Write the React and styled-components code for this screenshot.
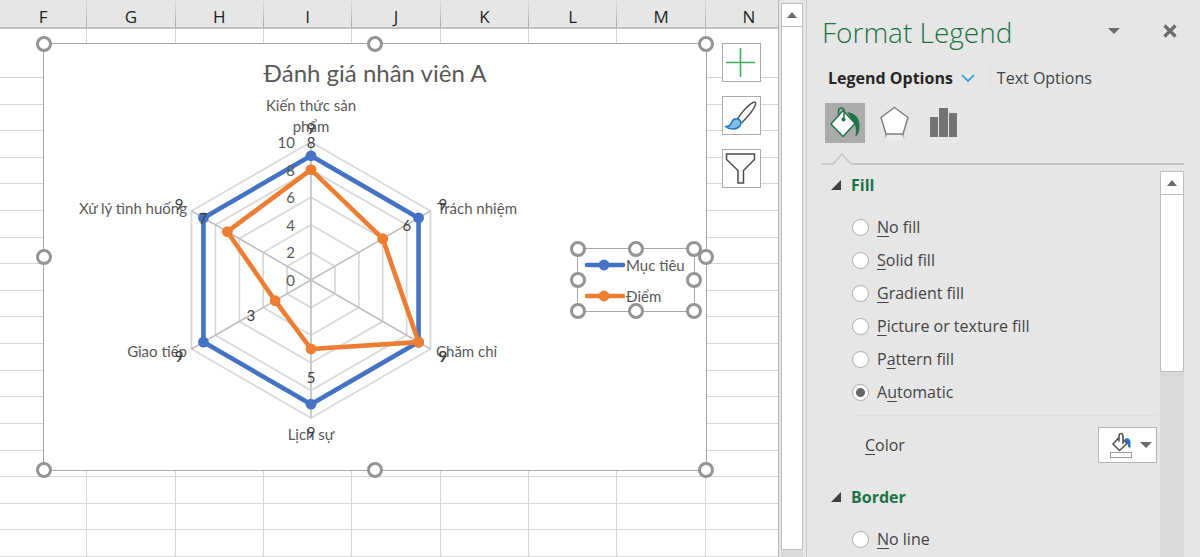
import React from 'react'
import styled, { createGlobalStyle } from 'styled-components'

const columns = ['F', 'G', 'H', 'I', 'J', 'K', 'L', 'M', 'N']
const rowCount = 19

const categories = [
    { lines: ['Kiến thức sản', 'phẩm'], x: 267, y: 61, anchor: 'middle' },
    { lines: ['Trách nhiệm'], x: 393, y: 164, anchor: 'start' },
    { lines: ['Chăm chỉ'], x: 392, y: 307, anchor: 'start' },
    { lines: ['Lịch sự'], x: 267, y: 390, anchor: 'middle' },
    { lines: ['Giao tiếp'], x: 143, y: 307, anchor: 'end' },
    { lines: ['Xử lý tình huống'], x: 143, y: 164, anchor: 'end' },
]

const series = [
    { name: 'Mục tiêu', color: '#4472c4', values: [9, 9, 9, 9, 9, 9] },
    { name: 'Điểm', color: '#ed7d31', values: [8, 6, 9, 5, 3, 7] },
]

const fillOptions = [
    ['', 'N', 'o fill'],
    ['', 'S', 'olid fill'],
    ['', 'G', 'radient fill'],
    ['', 'P', 'icture or texture fill'],
    ['P', 'a', 'ttern fill'],
    ['A', 'u', 'tomatic'],
]

const center = { x: 267, y: 236 }
const radius = 138

const point = (value, index, extra = 0) => {
    const angle = (Math.PI / 3) * index
    const r = (radius * value) / 10 + extra
    return [center.x + r * Math.sin(angle), center.y - r * Math.cos(angle)]
}

const ring = (values) => values.map((v, i) => point(v, i).join(',')).join(' ')

const Radar = () => (
    <Plot viewBox="0 0 662 426" role="img" aria-label="Đánh giá nhân viên A">
        {[2, 4, 6, 8, 10].map((n) => (
            <polygon key={n} points={ring(Array(6).fill(n))} fill="none" stroke="#d9d9d9" strokeWidth="1.8" />
        ))}
        {categories.map((c, i) => {
            const [x, y] = point(10, i)
            return <line key={i} x1={center.x} y1={center.y} x2={x} y2={y} stroke="#bfbfbf" strokeWidth="1.6" />
        })}
        {series.map((s) => (
            <g key={s.name} fill={s.color}>
                <polygon points={ring(s.values)} fill="none" stroke={s.color} strokeWidth="4.6" strokeLinejoin="round" />
                {s.values.map((v, i) => {
                    const [x, y] = point(v, i)
                    return <circle key={i} cx={x} cy={y} r="5.4" />
                })}
            </g>
        ))}
        {[0, 2, 4, 6, 8, 10].map((n) => (
            <Label key={n} x="251" y={center.y - (radius * n) / 10 + 6} textAnchor="end">{n}</Label>
        ))}
        {categories.map((c) => c.lines.map((line, i) => (
            <Label key={line} x={c.x} y={c.y + 6 + i * 21} textAnchor={c.anchor}>{line}</Label>
        )))}
        {series.map((s) => s.values.map((v, i) => {
            const [x, y] = point(v, i, 28)
            return <Label key={s.name + i} $dark x={x} y={y + 6} textAnchor="middle">{v}</Label>
        }))}
    </Plot>
)

const Handles = () => (
    <>
        {[[0, 0], [50, 0], [100, 0], [0, 50], [100, 50], [0, 100], [50, 100], [100, 100]].map(([x, y]) => (
            <Handle key={`${x}-${y}`} $x={x} $y={y} />
        ))}
    </>
)

const PlusIcon = () => (
    <svg width="37" height="37" fill="none" stroke="#3fae5a" strokeWidth="1.6">
        <path d="M17.5 4v29M3 18.5h29" />
    </svg>
)

const BrushIcon = () => (
    <svg width="37" height="37" fill="none" strokeLinejoin="round">
        <path d="M14.500 22C18 16 25 8 30 5.500c2-1 3.200 0 2.500 2C31 12.500 24 20.500 18.500 26" fill="#fff" stroke="#555" strokeWidth="1.5" />
        <path d="M2.500 29.500c3.500.2 5-1.200 6-4 1-3 3.700-4.500 6.500-3.500 3 1 3.800 4.200 2 6.800-2.800 4-10 4.500-14.500.7z" fill="#83bdea" stroke="#1e78c2" strokeWidth="1.5" />
    </svg>
)

const FunnelIcon = () => (
    <svg width="37" height="37" fill="#fafafa" stroke="#4d4d4d" strokeWidth="1.5">
        <path d="M3.500 4h28v5.500L20.500 20.500V33h-5.500V20.500L3.500 9.500z" />
    </svg>
)

const BucketIcon = () => (
    <svg width="40" height="40" fill="none">
        <path d="M22 9C29 10 35 14 34.500 24c0 4-1.500 8-4 9.500C31.500 27 31 21 27 17z" fill="#217346" />
        <path d="M18 7.500 30 20.500 18 33.500 6 21z" fill="#fff" stroke="#217346" strokeWidth="1.5" />
        <path d="M13.500 13V8c0-4 5.500-4 5.500 0v8" stroke="#217346" strokeWidth="1.4" />
        <circle cx="18.500" cy="16.500" r="2" fill="#217346" />
    </svg>
)

const PentagonIcon = () => (
    <svg width="40" height="40">
        <defs>
            <linearGradient id="reflection" x1="0" y1="0" x2="0" y2="1">
                <stop offset="0" stopColor="#8c8c8c" />
                <stop offset="1" stopColor="#e6e6e6" />
            </linearGradient>
        </defs>
        <path d="M11.500 30.500h16l2 6h-20z" fill="#ededed" />
        <path d="M10.500 31h1.500l-1.500 5.500H9zM27 31h1.500l1.500 5.500h-1.500z" fill="url(#reflection)" />
        <path d="M19.500 4.500 33 14.500 28 31H11L6 14.500z" fill="#fff" stroke="#808080" strokeWidth="1.5" />
    </svg>
)

const BarsIcon = () => (
    <svg width="40" height="40" fill="#737373">
        <path d="M5 14h8v20H5zM14 5h9v29h-9zM24 10h8v24h-8z" />
    </svg>
)

const FillColorIcon = () => (
    <svg width="24" height="26" fill="none">
        <path d="M15.500 7c3.500-2 6 0 6 3.500V16l-2.500-1c.5-3-1-4.500-3-5z" fill="#1f78c8" />
        <path d="M10 5.500 4 12l6.500 6.500L18 11.500 14.500 8M10 9.500V4.500c0-4 4-4 4 0v7.500" stroke="#555" strokeWidth="1.600" />
        <rect x="1.500" y="20.500" width="21" height="5" fill="#fff" stroke="#999" />
    </svg>
)

const Caret = ({ up }) => (
    <svg width="12" height="6" fill="#6b6b6b" aria-hidden="true">
        <path d={up ? 'M1 6h10L6 0z' : 'M0 0h12L6 6z'} />
    </svg>
)

const Radio = ({ name, text: [before, key, after], checked }) => (
    <Option>
        <RadioInput type="radio" name={name} defaultChecked={checked} />
        <span>{before}<u>{key}</u>{after}</span>
    </Option>
)

const Section = ({ title, children }) => (
    <section>
        <SectionTitle>
            <svg width="10" height="10" aria-hidden="true"><path d="M10 0v10H0z" fill="#404040" /></svg>
            {title}
        </SectionTitle>
        {children}
    </section>
)

const App = () => {
    return (
        <Window>
            <GlobalStyle />
            <Sheet>
                <HeaderRow>
                    {columns.map((c) => <ColumnHead key={c}>{c}</ColumnHead>)}
                </HeaderRow>
                <Cells>
                    {Array.from({ length: rowCount * columns.length }, (_, i) => <Cell key={i} />)}
                </Cells>
                <ChartArea>
                    <Radar />
                    <ChartTitle>Đánh giá nhân viên A</ChartTitle>
                    <Legend>
                        {series.map((s) => (
                            <LegendItem key={s.name}>
                                <svg width="42" height="12">
                                    <path d="M3 6h36" stroke={s.color} strokeWidth="4.600" strokeLinecap="round" />
                                    <circle cx="20" cy="6" r="5.400" fill={s.color} />
                                </svg>
                                {s.name}
                            </LegendItem>
                        ))}
                        <Handles />
                    </Legend>
                    <Handles />
                    <ChartTools>
                        <ToolButton aria-label="Chart Elements"><PlusIcon /></ToolButton>
                        <ToolButton aria-label="Chart Styles"><BrushIcon /></ToolButton>
                        <ToolButton aria-label="Chart Filters"><FunnelIcon /></ToolButton>
                    </ChartTools>
                </ChartArea>
            </Sheet>
            <SheetScroll>
                <ScrollButton aria-label="Scroll up"><Caret up /></ScrollButton>
                <SheetThumb />
            </SheetScroll>
            <Panel>
                <PanelHeader>
                    <PanelTitle>Format Legend</PanelTitle>
                    <PlainButton aria-label="Task pane options"><Caret /></PlainButton>
                    <PlainButton aria-label="Close">
                        <svg width="14" height="14" stroke="#6b6b6b" strokeWidth="3.200"><path d="m1.500 1.500 11 11m0-11-11 11" /></svg>
                    </PlainButton>
                </PanelHeader>
                <Tabs>
                    <TabButton $active>
                        Legend Options
                        <svg width="14" height="9" fill="none" stroke="#2b93dc" strokeWidth="1.600"><path d="m1 1 6 6 6-6" /></svg>
                    </TabButton>
                    <TabButton>Text Options</TabButton>
                </Tabs>
                <IconTabs>
                    <IconTab $active aria-label="Fill &amp; Line"><BucketIcon /></IconTab>
                    <IconTab aria-label="Effects"><PentagonIcon /></IconTab>
                    <IconTab aria-label="Legend Options"><BarsIcon /></IconTab>
                </IconTabs>
                <Divider>
                    <svg width="30" height="13" fill="none"><path d="M0 12h11l9-10 9 10h1" stroke="#c3c3c3" strokeWidth="1.500" /></svg>
                    <Rule />
                </Divider>
                <PanelBody>
                    <Options>
                        <Section title="Fill">
                            <RadioGroup>
                                {fillOptions.map((o, i) => <Radio key={i} name="fill" text={o} checked={i === 5} />)}
                            </RadioGroup>
                            <ColorRow>
                                <label htmlFor="fill-color"><u>C</u>olor</label>
                                <ColorButton id="fill-color" aria-haspopup="true">
                                    <FillColorIcon />
                                    <Caret />
                                </ColorButton>
                            </ColorRow>
                        </Section>
                        <Section title="Border">
                            <RadioGroup>
                                <Radio name="border" text={['', 'N', 'o line']} />
                            </RadioGroup>
                        </Section>
                    </Options>
                    <PanelScroll>
                        <ScrollButton aria-label="Scroll up"><Caret up /></ScrollButton>
                        <PanelThumb />
                    </PanelScroll>
                </PanelBody>
            </Panel>
        </Window>
    )
}

export default App

const GlobalStyle = createGlobalStyle`
    * {
        box-sizing: border-box;
    }

    body {
        margin: 0;
        overflow: hidden;
        background: #e6e6e6;
        font-family: 'Open Sans', 'Noto Sans', sans-serif;
    }

    button {
        display: flex;
        align-items: center;
        justify-content: center;
        padding: 0;
        border: 0;
        background: none;
        font: inherit;
        color: inherit;
    }

    svg {
        display: block;
        flex-shrink: 0;
    }
`;

const Window = styled.div`
    display: flex;
    height: 100vh;
`;

const Sheet = styled.main`
    position: relative;
    flex: 1;
    min-width: 0;
    display: flex;
    flex-direction: column;
    background: #fff;
    border-right: 1px solid #b5b5b5;
`;

const HeaderRow = styled.div`
    display: grid;
    grid-template-columns: 87fr repeat(7, 88fr) 72fr;
    height: 29px;
    background: #e6e6e6;
    border-bottom: 2px solid #c0c0c0;
`;

const ColumnHead = styled.div`
    display: flex;
    align-items: center;
    justify-content: center;
    padding-top: 6px;
    font-size: 17px;
    line-height: 20px;
    color: #1f1f1f;
    border-right: 1px solid;
    border-image: linear-gradient(#e0e0e0, #a8a8a8) 1;

    &:last-child {
        border-right: 0;
        padding-left: 14px;
    }
`;

const Cells = styled.div`
    flex: 1;
    display: grid;
    grid-template-columns: 87fr repeat(7, 88fr) 72fr;
    grid-template-rows: 49px;
    grid-auto-rows: 1fr;
`;

const Cell = styled.div`
    border-right: 1px solid #d6d6d6;
    border-bottom: 1px solid #d6d6d6;

    &:nth-child(-n + 9) {
        border-bottom-color: #d0d0d0;
    }

    &:nth-child(9n) {
        border-right: 0;
    }
`;

const ChartArea = styled.figure`
    position: absolute;
    left: 43px;
    top: 43px;
    width: 664px;
    height: 428px;
    margin: 0;
    background: #fff;
    border: 1px solid #a6a6a6;
    font-family: Lato, Carlito, sans-serif;
    color: #595959;
`;

const Plot = styled.svg`
    width: 100%;
    height: 100%;
`;

const Label = styled.text`
    font-size: 15px;
    fill: ${(p) => (p.$dark ? '#404040' : '#595959')};
`;

const ChartTitle = styled.figcaption`
    position: absolute;
    top: 14px;
    left: 0;
    right: 0;
    text-align: center;
    font-size: 24px;
    line-height: 30px;
`;

const Legend = styled.div`
    position: absolute;
    left: 533px;
    top: 204px;
    width: 118px;
    height: 64px;
    display: flex;
    flex-direction: column;
    justify-content: space-around;
    padding-left: 6px;
    border: 1px solid #a6a6a6;
`;

const LegendItem = styled.div`
    display: flex;
    align-items: center;
    font-size: 15px;
    line-height: 20px;
    white-space: nowrap;
`;

const Handle = styled.span`
    position: absolute;
    left: ${(p) => p.$x}%;
    top: ${(p) => p.$y}%;
    width: 16px;
    height: 16px;
    margin: -8px;
    border: 3px solid #949494;
    border-radius: 50%;
    background: #fff;
`;

const ChartTools = styled.div`
    position: absolute;
    left: 678px;
    top: -1px;
    display: flex;
    flex-direction: column;
    gap: 14px;
`;

const ToolButton = styled.button`
    width: 39px;
    height: 39px;
    background: #fff;
    border: 1px solid #ababab;
`;

const SheetScroll = styled.div`
    display: flex;
    flex-direction: column;
    width: 28px;
    padding: 3px 3px 0 2px;
    border-right: 1px solid #c6c6c6;
    background: linear-gradient(#d9d9d9, #d9d9d9) content-box, #e6e6e6;
`;

const ScrollButton = styled.button`
    height: 24px;
    background: #fff;
    border: 1px solid #bdbdbd;
`;

const SheetThumb = styled.div`
    flex: 1;
    margin: -1px 0 7px;
    background: #fff;
    border: 1px solid #bdbdbd;
`;

const Panel = styled.aside`
    display: flex;
    flex-direction: column;
    width: 393px;
    padding: 14px 16px 0 15px;
    background: #e6e6e6;
    color: #444;
`;

const PanelHeader = styled.header`
    display: flex;
    align-items: center;
    gap: 43px;
    height: 36px;
    padding-right: 7px;
`;

const PanelTitle = styled.h1`
    flex: 1;
    margin: 0;
    font-size: 28px;
    line-height: 36px;
    font-weight: 300;
    color: #217346;
`;

const PlainButton = styled.button`
    height: 24px;
    padding-bottom: 2px;
`;

const Tabs = styled.nav`
    display: flex;
    gap: 15px;
    padding: 16px 0 0 6px;
`;

const TabButton = styled.button`
    gap: 8px;
    font-size: 16px;
    line-height: 24px;
    white-space: nowrap;
    font-weight: ${(p) => (p.$active ? 700 : 400)};
    color: ${(p) => (p.$active ? '#262626' : '#444')};

    & + & {
        padding-left: 6px;
        border-left: 1px solid #dedede;
    }
`;

const IconTabs = styled.div`
    display: flex;
    gap: 10px;
    padding: 13px 0 0 3px;
`;

const IconTab = styled.button`
    width: 40px;
    height: 40px;
    background: ${(p) => (p.$active ? '#ababab' : 'transparent')};
`;

const Divider = styled.div`
    display: flex;
    align-items: flex-end;
    padding-top: 9px;
`;

const Rule = styled.div`
    flex: 1;
    height: 2px;
    background: #c3c3c3;
`;

const PanelBody = styled.div`
    flex: 1;
    min-height: 0;
    display: flex;
    gap: 3px;
    padding-top: 6px;
`;

const Options = styled.div`
    flex: 1;
    overflow: hidden;
    padding-left: 9px;
    font-size: 16px;
`;

const SectionTitle = styled.h2`
    display: flex;
    align-items: center;
    gap: 10px;
    margin: 2px 0 18px;
    font-size: 16px;
    line-height: 24px;
    color: #217346;
`;

const RadioGroup = styled.div`
    display: grid;
    gap: 9px;
    margin-left: 21px;
    padding-bottom: 11px;
    border-bottom: 1px solid #dedede;
`;

const Option = styled.label`
    display: flex;
    align-items: center;
    gap: 8px;
    line-height: 24px;

    u {
        text-underline-offset: 3px;
    }
`;

const RadioInput = styled.input`
    appearance: none;
    width: 17px;
    height: 17px;
    margin: 0;
    border: 1px solid #ababab;
    border-radius: 50%;
    background: #fff;

    &:checked {
        background: radial-gradient(circle, #666 4px, #fff 5px);
    }
`;

const ColorRow = styled.div`
    display: flex;
    align-items: center;
    justify-content: space-between;
    padding: 11px 0 20px 34px;

    u {
        text-underline-offset: 3px;
    }
`;

const ColorButton = styled.button`
    width: 59px;
    height: 36px;
    gap: 7px;
    padding-left: 5px;
    background: #fff;
    border: 1px solid #b3b3b3;
`;

const PanelScroll = styled.div`
    display: flex;
    flex-direction: column;
    width: 24px;
    background: #d9d9d9;
`;

const PanelThumb = styled.div`
    height: 46%;
    margin-top: -1px;
    background: #fff;
    border: 1px solid #bdbdbd;
`;
